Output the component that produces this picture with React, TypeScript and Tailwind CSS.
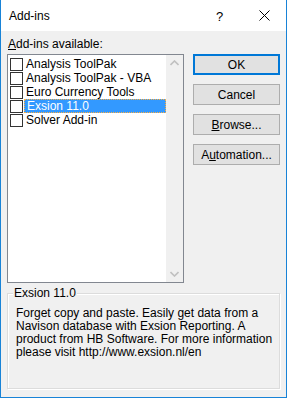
import React from "react";

const items = [
  "Analysis ToolPak",
  "Analysis ToolPak - VBA",
  "Euro Currency Tools",
  "Exsion 11.0",
  "Solver Add-in",
];

const Btn = ({ children, primary }: { children: React.ReactNode; primary?: boolean }) => (
  <div
    className={
      "h-[21px] w-[87px] flex items-center justify-center bg-[#e1e1e1] text-[12px] " +
      (primary ? "border-2 border-[#0078d7]" : "border border-[#adadad]")
    }
  >
    {children}
  </div>
);

const App = () => {
  return (
    <div
      className="w-[287px] h-[398px] bg-[#f0f0f0] border-x border-b border-[#1883d7] flex flex-col text-black"
      style={{ fontFamily: '"Liberation Sans", Arial, sans-serif' }}
    >
      {/* title bar */}
      <div className="h-[31px] bg-white flex items-center pl-[8px] relative">
        <span className="text-[12px]">Add-ins</span>
        <span className="absolute left-[215px] top-[7px] text-[13px]">?</span>
        <svg className="absolute left-[258px] top-[10px]" width="11" height="11" viewBox="0 0 11 11">
          <path d="M0.5 0.5 L10.5 10.5 M10.5 0.5 L0.5 10.5" stroke="#000" strokeWidth="1" />
        </svg>
      </div>

      <div className="flex px-[6px] pt-[4px]">
        {/* left side */}
        <div className="flex flex-col w-[177px]">
          <div className="text-[12px] h-[19px] leading-[19px] pl-[1px]">
            <span className="underline">A</span>dd-ins available:
          </div>
          <div className="h-[229px] border border-[#828790] bg-white flex">
            <div className="flex-1 flex flex-col pt-[2px] pl-[2px]">
              {items.map((it) => (
                <div key={it} className="h-[14px] flex items-center">
                  <div className="w-[13px] h-[13px] border border-[#333] bg-white mr-[1px]" />
                  <div
                    className={
                      "h-[14px] flex-1 flex items-center pl-[2px] text-[12px] leading-none " +
                      (it === "Exsion 11.0" ? "bg-[#3399ff] text-white border border-dotted border-[#ffb040]" : "")
                    }
                  >
                    {it}
                  </div>
                </div>
              ))}
            </div>
            <div className="w-[17px] bg-[#f0f0f0] flex flex-col justify-between items-center py-[5px]">
              <svg width="9" height="6" viewBox="0 0 9 6">
                <path d="M0.5 5 L4.5 1 L8.5 5" fill="none" stroke="#c0c0c0" strokeWidth="1.6" />
              </svg>
              <svg width="9" height="6" viewBox="0 0 9 6">
                <path d="M0.5 1 L4.5 5 L8.5 1" fill="none" stroke="#c0c0c0" strokeWidth="1.6" />
              </svg>
            </div>
          </div>
        </div>

        {/* buttons */}
        <div className="flex flex-col gap-[9px] ml-[9px] pt-[19px]">
          <Btn primary>OK</Btn>
          <Btn>Cancel</Btn>
          <Btn>
            <span>
              <span className="underline">B</span>rowse...
            </span>
          </Btn>
          <Btn>
            <span>
              A<span className="underline">u</span>tomation...
            </span>
          </Btn>
        </div>
      </div>

      {/* group box */}
      <div className="mx-[6px] mt-[10px] h-[96px] border border-[#dcdcdc] shadow-[inset_1px_1px_0_#fff,1px_1px_0_#fff] relative">
        <span className="absolute left-[5px] top-[-9px] bg-[#f0f0f0] px-[1px] text-[12px] leading-[16px]">
          Exsion 11.0
        </span>
        <div className="pt-[13px] pl-[8px] text-[12px] leading-[13px] whitespace-nowrap">
          Forget copy and paste. Easily get data from a
          <br />
          Navison database with Exsion Reporting. A
          <br />
          product from HB Software. For more information
          <br />
          please visit http://www.exsion.nl/en
        </div>
      </div>
    </div>
  );
};

export default App;
